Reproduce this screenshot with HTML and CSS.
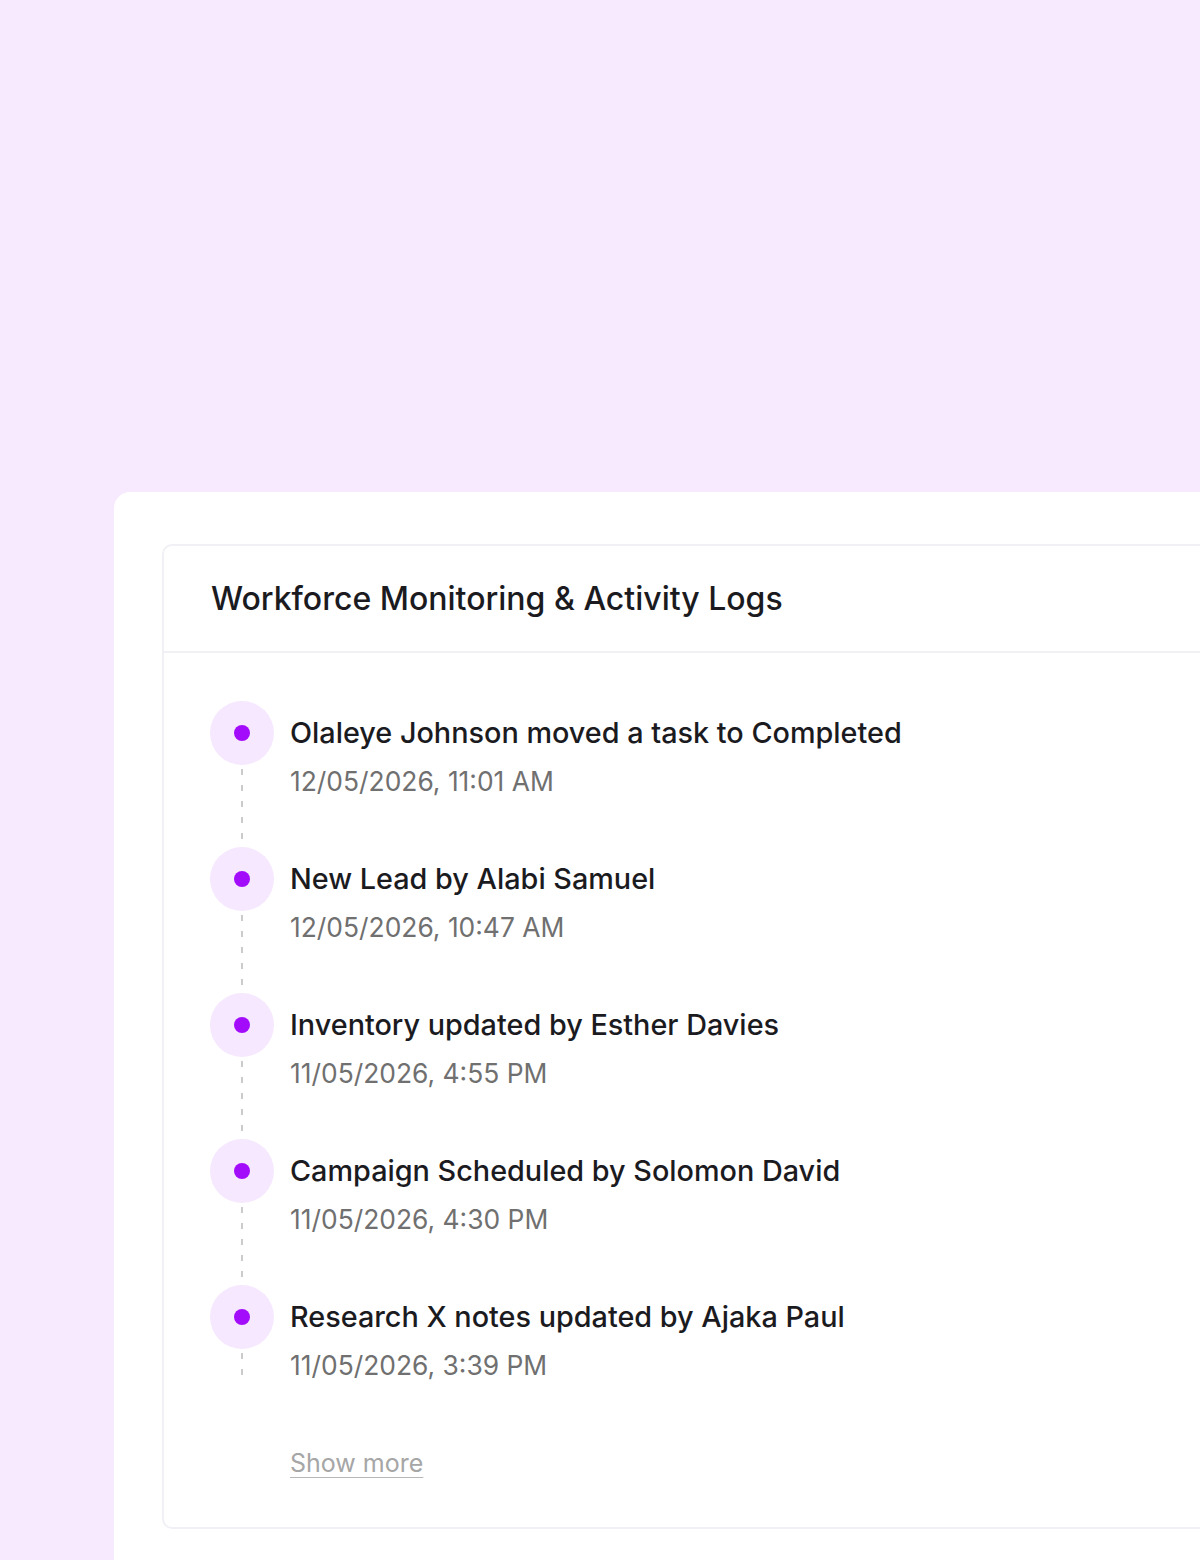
FILE: index.html
```html
<!DOCTYPE html>
<html lang="en">
<head>
<meta charset="utf-8">
<title>Workforce Monitoring &amp; Activity Logs</title>
<link rel="stylesheet" href="styles.css">
</head>
<body>
<main class="panel">
  <section class="card">
    <header class="card-header">
      <h2 class="card-title">Workforce Monitoring &amp; Activity Logs</h2>
    </header>
    <div class="card-body">
      <ul class="timeline">
        <li class="item">
          <div class="rail"><span class="marker"><span class="dot"></span></span><span class="connector"></span></div>
          <div class="content">
            <p class="item-title">Olaleye Johnson moved a task to Completed</p>
            <p class="item-date">12/05/2026, 11:01 AM</p>
          </div>
        </li>
        <li class="item">
          <div class="rail"><span class="marker"><span class="dot"></span></span><span class="connector"></span></div>
          <div class="content">
            <p class="item-title">New Lead by Alabi Samuel</p>
            <p class="item-date">12/05/2026, 10:47 AM</p>
          </div>
        </li>
        <li class="item">
          <div class="rail"><span class="marker"><span class="dot"></span></span><span class="connector"></span></div>
          <div class="content">
            <p class="item-title">Inventory updated by Esther Davies</p>
            <p class="item-date">11/05/2026, 4:55 PM</p>
          </div>
        </li>
        <li class="item">
          <div class="rail"><span class="marker"><span class="dot"></span></span><span class="connector"></span></div>
          <div class="content">
            <p class="item-title">Campaign Scheduled by Solomon David</p>
            <p class="item-date">11/05/2026, 4:30 PM</p>
          </div>
        </li>
        <li class="item">
          <div class="rail"><span class="marker"><span class="dot"></span></span><span class="connector"></span></div>
          <div class="content">
            <p class="item-title">Research X notes updated by Ajaka Paul</p>
            <p class="item-date">11/05/2026, 3:39 PM</p>
          </div>
        </li>
      </ul>
      <a class="show-more" href="#">Show more</a>
    </div>
  </section>
</main>
</body>
</html>
```

FILE: styles.css
```css
* { box-sizing: border-box; }

html, body {
  margin: 0;
  padding: 0;
}

body {
  background: #f7e9fe;
  font-family: Inter, "Noto Sans", "Liberation Sans", sans-serif;
  padding: 492px 0 0 114px;
  height: 1560px;
  overflow: hidden;
}

.panel {
  background: #ffffff;
  border-top-left-radius: 16px;
  padding: 52px 0 40px 48px;
  min-height: 1068px;
}

.card {
  border: 2px solid #f1f0f5;
  border-right: none;
  border-radius: 10px 0 0 10px;
  background: #fff;
}

.card-header {
  height: 107px;
  border-bottom: 2px solid #f1f0f5;
  display: flex;
  align-items: center;
  padding-left: 47px;
}

.card-title {
  margin: 0;
  font-size: 32px;
  font-weight: 500;
  color: #1b1b1f;
  letter-spacing: 0;
}

.card-body {
  padding: 48px 0 48px 46px;
}

.timeline {
  list-style: none;
  margin: 0;
  padding: 0;
  display: flex;
  flex-direction: column;
}

.item {
  display: flex;
  gap: 16px;
}

.rail {
  width: 64px;
  display: flex;
  flex-direction: column;
  align-items: center;
}

.marker {
  width: 64px;
  height: 64px;
  border-radius: 50%;
  background: #f6e8fe;
  display: flex;
  align-items: center;
  justify-content: center;
  flex: none;
}

.dot {
  width: 16px;
  height: 16px;
  border-radius: 50%;
  background: #a30cfb;
}

.connector {
  flex: 1;
  width: 2px;
  margin: 4px 0 6px;
  background-image: linear-gradient(to bottom, #cbcbcb 0 6px, transparent 6px 16px);
  background-size: 2px 16px;
  background-repeat: repeat-y;
}

.content {
  display: flex;
  flex-direction: column;
  min-height: 96px;
  padding-bottom: 50px;
}

.item:last-child .content {
  padding-bottom: 0;
}

.item-title {
  margin: 0;
  font-size: 28.8px;
  line-height: 64px;
  font-weight: 500;
  color: #1b1b1f;
  letter-spacing: 0;
}

.item-date {
  margin: 0;
  font-size: 26.4px;
  line-height: 32px;
  color: #707070;
  letter-spacing: 0;
}

.show-more {
  display: inline-block;
  margin: 66px 0 0 80px;
  font-size: 25px;
  line-height: 32px;
  color: #a6a6a6;
  text-decoration: underline;
  text-decoration-color: #b8b8b8;
  text-underline-offset: 5px;
  text-decoration-thickness: 1px;
}
```
